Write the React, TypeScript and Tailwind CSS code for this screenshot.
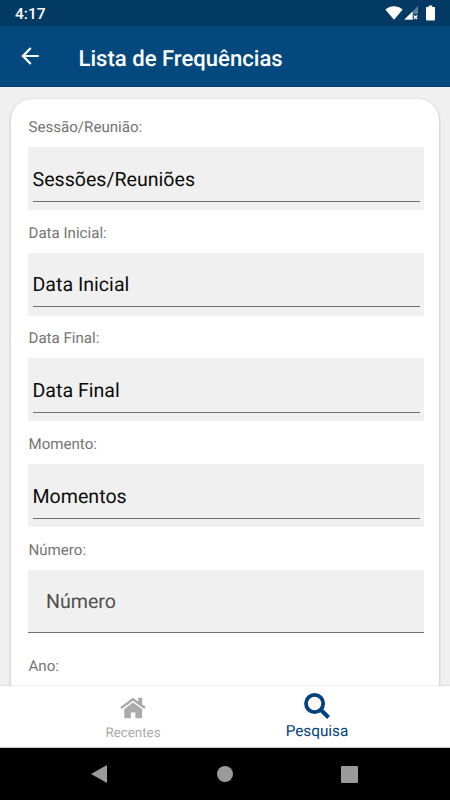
import { MdArrowBack } from "react-icons/md";

interface PickerProps {
  label: string;
  value: string;
}

function FieldLabel({ text }: { text: string }) {
  return <label className="block h-5 pl-[0.5px] text-[15.1px] leading-5 text-[#757575]">{text}</label>;
}

function PickerField({ label, value }: PickerProps) {
  return (
    <div className="h-[105.7px]">
      <FieldLabel text={label} />
      <div className="mt-2.5 h-[63px] bg-[#f0f0f0] px-[4.5px]">
        <div className="flex h-[54.5px] items-end border-b border-[#707070] pb-[7px]">
          <span className="text-[19.6px] leading-[28px] text-[#0c0c0c]">{value}</span>
        </div>
      </div>
    </div>
  );
}

function HomeIcon() {
  return (
    <svg className="size-[26px]" viewBox="0 0 26 26" fill="currentColor">
      <path d="M1 13L13 4.2L25 13" fill="none" stroke="currentColor" strokeWidth="2.5" />
      <path d="M18.2 2.8H22.2V11L18.2 8Z" />
      <path d="M13 7.4L22 14V23.3H15.4V17.4H10.8V23.3H4.3V14Z" />
    </svg>
  );
}

function SearchIcon() {
  return (
    <svg className="size-[26px]" viewBox="0 0 26 26" fill="none" stroke="currentColor">
      <circle cx="10.6" cy="10.5" r="8.6" strokeWidth="3.8" />
      <path d="M16.5 16.5L24.5 24.5" strokeWidth="4" />
    </svg>
  );
}

function StatusBar() {
  return (
    <div className="flex h-[26px] items-start justify-between bg-[#033a63] pr-[15px] pl-[15px] text-white">
      <span className="mt-[3px] text-[15.5px] leading-[22px] font-medium">4:17</span>
      <div className="flex items-start">
        <svg className="mt-[6px] h-[14px] w-[18px]" viewBox="0 0 18 14" fill="currentColor">
          <path d="M0.3 3.6C5.2-1 12.8-1 17.7 3.6L9 13.8Z" />
        </svg>
        <svg className="mt-[6px] ml-[1px] h-[14px] w-[15px]" viewBox="0 0 15 14">
          <path d="M14 0V8H9V14H0Z" fill="#58809d" />
          <path d="M8.5 5.5V13.6H0.4Z" fill="#fff" />
          <path d="M9.8 9.5L13.2 13M13.2 9.5L9.8 13" stroke="#fff" strokeWidth="1.4" />
        </svg>
        <svg className="mt-[5px] ml-[7px] h-[16px] w-[9px]" viewBox="0 0 9 16" fill="currentColor">
          <path d="M2.7 0.4H6.3V2H8.4Q9 2 9 2.6V14.6Q9 15.4 8.3 15.4H0.7Q0 15.4 0 14.6V2.6Q0 2 0.6 2H2.7Z" />
        </svg>
      </div>
    </div>
  );
}

const pickers: PickerProps[] = [
  { label: "Sessão/Reunião:", value: "Sessões/Reuniões" },
  { label: "Data Inicial:", value: "Data Inicial" },
  { label: "Data Final:", value: "Data Final" },
  { label: "Momento:", value: "Momentos" },
];

export default function App() {
  return (
    <div className="flex h-[800px] w-[450px] flex-col overflow-hidden bg-[#f0f0f0] font-['Roboto',sans-serif] [text-rendering:geometricPrecision]">
      <StatusBar />
      <header className="flex h-[61px] shrink-0 items-center border-b border-[#003a7c] bg-[#04497d] pl-[16.5px] text-white">
        <MdArrowBack className="size-[26px]" />
        <h1 className="ml-9 pt-[5px] text-[22.1px] leading-7 font-medium">Lista de Frequências</h1>
      </header>

      <main className="min-h-0 flex-1 overflow-hidden px-[11px] pt-3">
        <div className="h-[700px] rounded-t-[21px] bg-white px-[17px] pt-[18px] pr-[15px] shadow-[0_1px_3px_rgba(0,0,0,0.28)]">
          {pickers.map((field) => (
            <PickerField key={field.label} label={field.label} value={field.value} />
          ))}
          <div className="h-[116.5px]">
            <FieldLabel text="Número:" />
            <div className="mt-2.5 flex h-[63px] items-center border-b border-[#707070] bg-[#f0f0f0] px-[18px] pt-[2px]">
              <span className="text-[19.6px] text-[#4f4f4f]">Número</span>
            </div>
          </div>
          <FieldLabel text="Ano:" />
        </div>
      </main>

      <nav className="z-10 flex h-[62px] shrink-0 justify-center border-b border-[#c8c8c8] bg-white shadow-[0_-1px_1px_rgba(0,0,0,0.06)]">
        <div className="flex w-[184px] flex-col items-center pt-[9px] text-[#aaaaaa]">
          <HomeIcon />
          <span className="mt-[3px] text-[13.4px] leading-[19px]">Recentes</span>
        </div>
        <div className="flex w-[184px] flex-col items-center pt-[7px] text-[#04427d]">
          <SearchIcon />
          <span className="mt-[2px] text-[15.3px] leading-[21px]">Pesquisa</span>
        </div>
      </nav>

      <div className="flex h-[52px] shrink-0 items-center justify-between bg-black pr-[92px] pl-[91px] text-[#9b9b9b]">
        <svg className="h-[18px] w-4" viewBox="0 0 16 18" fill="currentColor">
          <path d="M16 0V18L0 9Z" />
        </svg>
        <span className="ml-px size-4 rounded-full bg-[#9b9b9b]" />
        <span className="size-[17px] rounded-[1px] bg-[#9b9b9b]" />
      </div>
    </div>
  );
}
